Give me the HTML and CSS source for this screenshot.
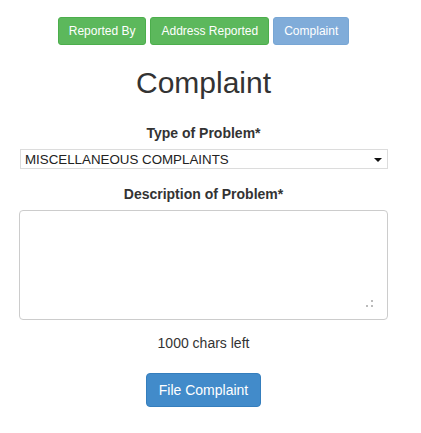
FILE: index.html
```html
<!DOCTYPE html>
<html>
<head>
<meta charset="utf-8">
<link rel="stylesheet" href="styles.css">
</head>
<body>
<div class="page">
  <div class="tabs">
    <button class="tab tab-done">Reported By</button>
    <button class="tab tab-done">Address Reported</button>
    <button class="tab tab-current">Complaint</button>
  </div>
  <h2 class="title">Complaint</h2>
  <label class="label label-type">Type of Problem*</label>
  <div class="select-wrap">
    <select class="select">
      <option>MISCELLANEOUS COMPLAINTS</option>
    </select>
  </div>
  <label class="label label-desc">Description of Problem*</label>
  <div class="area-wrap">
    <textarea class="area"></textarea>
    <span class="grip"><i></i><i></i><i></i></span>
  </div>
  <div class="counter">1000 chars left</div>
  <div class="actions">
    <button class="submit">File Complaint</button>
  </div>
</div>
</body>
</html>
```

FILE: styles.css
```css
* { box-sizing: border-box; }
html, body { margin: 0; padding: 0; background: #fff; }
body {
  font-family: "Liberation Sans", Arial, sans-serif;
  font-size: 14px;
  line-height: 20px;
  color: #333;
}
.page {
  width: 369px;
  margin-left: 19px;
  display: flex;
  flex-direction: column;
  align-items: center;
  text-align: center;
}
.tabs {
  display: flex;
  gap: 4px;
  margin-top: 17px;
}
.tab {
  font-family: inherit;
  font-size: 12px;
  line-height: 18px;
  height: 28px;
  padding: 4px 10px;
  border-radius: 3px;
  color: #fff;
  border: 1px solid transparent;
}
.tab-done { background: #5cb85c; border-color: #4cae4c; }
.tab-current { background: #80acd9; border-color: #78a6d4; }
.title {
  margin: 21px 0 0;
  font-size: 30px;
  line-height: 33px;
  font-weight: 500;
}
.label {
  display: block;
  font-weight: bold;
  font-size: 14px;
  line-height: 20px;
  margin-bottom: 6px;
}
.label-type { margin-top: 24px; }
.label-desc { margin-top: 15px; }
.select-wrap {
  position: relative;
  width: 368px;
  margin-left: 1px;
}
.select {
  display: block;
  width: 100%;
  height: 20px;
  margin: 0;
  padding: 0 0 0 4px;
  font-family: "Liberation Sans", Arial, sans-serif;
  font-size: 13.33px;
  color: #222;
  background: #fff;
  border: 1px solid #dcdcdc;
  border-radius: 0;
  appearance: none;
  -webkit-appearance: none;
}
.select-wrap::after {
  content: "";
  position: absolute;
  right: 6px;
  top: 9px;
  border-left: 4px solid transparent;
  border-right: 4px solid transparent;
  border-top: 4px solid #111;
}
.area-wrap {
  position: relative;
  width: 369px;
  height: 110px;
}
.area {
  display: block;
  width: 100%;
  height: 100%;
  margin: 0;
  border: 1px solid #ccc;
  border-radius: 4px;
  resize: none;
  font-family: inherit;
}
.grip {
  position: absolute;
  right: 15px;
  bottom: 13px;
  width: 7px;
  height: 7px;
}
.grip i {
  position: absolute;
  width: 2px;
  height: 2px;
  background: #bbb;
}
.grip i:nth-child(1) { right: 0; top: 0; }
.grip i:nth-child(2) { right: 0; bottom: 0; }
.grip i:nth-child(3) { left: 0; bottom: 0; }
.counter {
  margin-top: 13px;
  font-size: 14px;
  line-height: 20px;
}
.actions { margin-top: 20px; }
.submit {
  font-family: inherit;
  font-size: 14px;
  line-height: 20px;
  height: 34px;
  padding: 6px 12px;
  color: #fff;
  background: #428bca;
  border: 1px solid #357ebd;
  border-radius: 4px;
}
```
